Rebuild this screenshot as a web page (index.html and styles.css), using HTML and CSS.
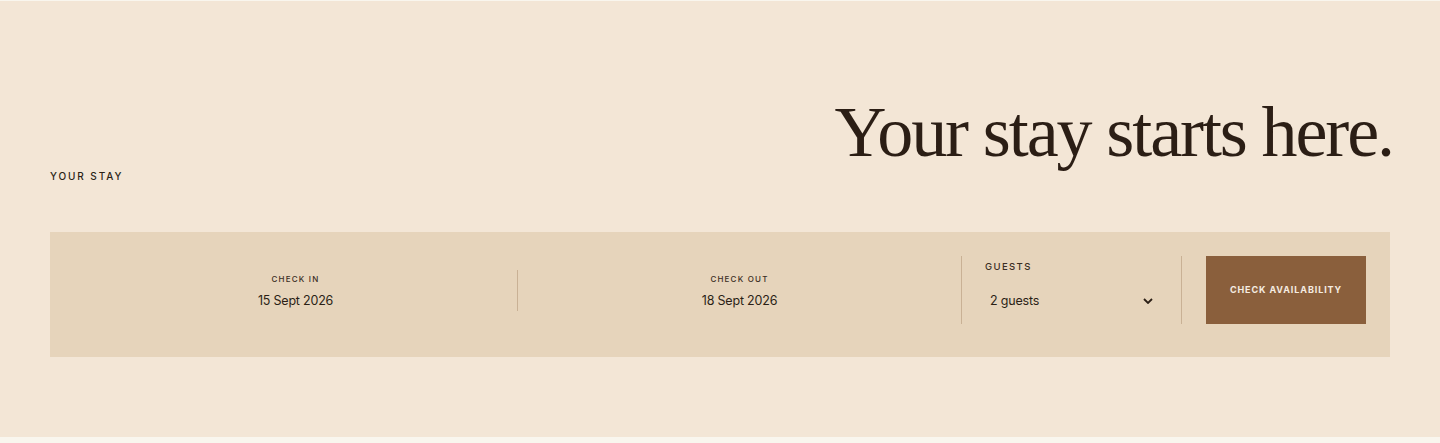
FILE: index.html
```html
<!DOCTYPE html>
<html lang="en">
<head>
<meta charset="utf-8">
<title>Your stay</title>
<link rel="stylesheet" href="styles.css">
</head>
<body>
<section class="stay">
  <div class="head">
    <p class="eyebrow">YOUR STAY</p>
    <h1 class="title">Your stay starts here.</h1>
  </div>
  <form class="bar">
    <div class="field field-date field-in">
      <span class="label">CHECK IN</span>
      <span class="value">15 Sept 2026</span>
    </div>
    <div class="field field-date">
      <span class="label">CHECK OUT</span>
      <span class="value">18 Sept 2026</span>
    </div>
    <div class="field field-guests">
      <span class="label label-lg">GUESTS</span>
      <div class="select">
        <span class="value">2 guests</span>
        <svg class="chev" width="10" height="6" viewBox="0 0 10 6"><path d="M1 1l4 4 4-4" fill="none" stroke="#2b1f16" stroke-width="1.8"/></svg>
      </div>
    </div>
    <button type="button" class="btn">CHECK AVAILABILITY</button>
  </form>
</section>
<div class="next"></div>
</body>
</html>
```
FILE: styles.css
```css
html, body { margin: 0; padding: 0; }
body {
  background: #f9f6ee;
  font-family: "Inter", "Liberation Sans", sans-serif;
  color: #2b1f16;
  padding-top: 1px;
}
.stay {
  background: #f3e6d6;
  height: 436px;
  box-sizing: border-box;
  padding: 89px 50px 0;
}
.head {
  display: flex;
  justify-content: space-between;
  align-items: flex-end;
}
.eyebrow {
  margin: 0 0 -8px;
  font-size: 10px;
  letter-spacing: 1.9px;
  font-weight: 500;
  color: #2b1f16;
}
.title {
  margin: 0 -3px 0 0;
  font-family: "Liberation Serif", "Times New Roman", serif;
  font-weight: 400;
  font-size: 72px;
  line-height: 84px;
  letter-spacing: -2.1px;
  color: #2b1e15;
}
.bar {
  margin-top: 58px;
  background: #e6d4bb;
  display: flex;
  align-items: stretch;
  padding: 24px 24px 33px;
}
.field {
  display: flex;
  flex-direction: column;
}
.field-date {
  flex: 1;
  align-self: center;
  align-items: center;
  gap: 9px;
  padding: 4px 0 3px;
}
.field-in { border-right: 1px solid #c9b195; }
.field-guests {
  width: 172px;
  padding: 5px 24px 0 23px;
  border-left: 1px solid #c9b195;
  border-right: 1px solid #c9b195;
  gap: 21px;
}
.label {
  font-size: 8px;
  letter-spacing: 1.2px;
  font-weight: 500;
  color: #3a2d23;
}
.label-lg {
  font-size: 9.5px;
  letter-spacing: 1.4px;
}
.value {
  font-size: 12.5px;
  letter-spacing: -0.2px;
  color: #2b1f16;
}
.select {
  display: flex;
  justify-content: space-between;
  align-items: center;
  padding: 0 4px 0 5px;
}
.chev { display: block; }
.btn {
  margin-left: 24px;
  width: 160px;
  height: 68px;
  border: 0;
  background: #8a5f3c;
  color: #f5ece1;
  font-family: "Inter", "Liberation Sans", sans-serif;
  font-size: 9px;
  font-weight: 700;
  letter-spacing: 0.9px;
  padding: 0 0 2px;
}
.next {
  height: 6px;
  background: #f9f6ee;
  border-bottom: 1px solid #f3e6d6;
}
```
